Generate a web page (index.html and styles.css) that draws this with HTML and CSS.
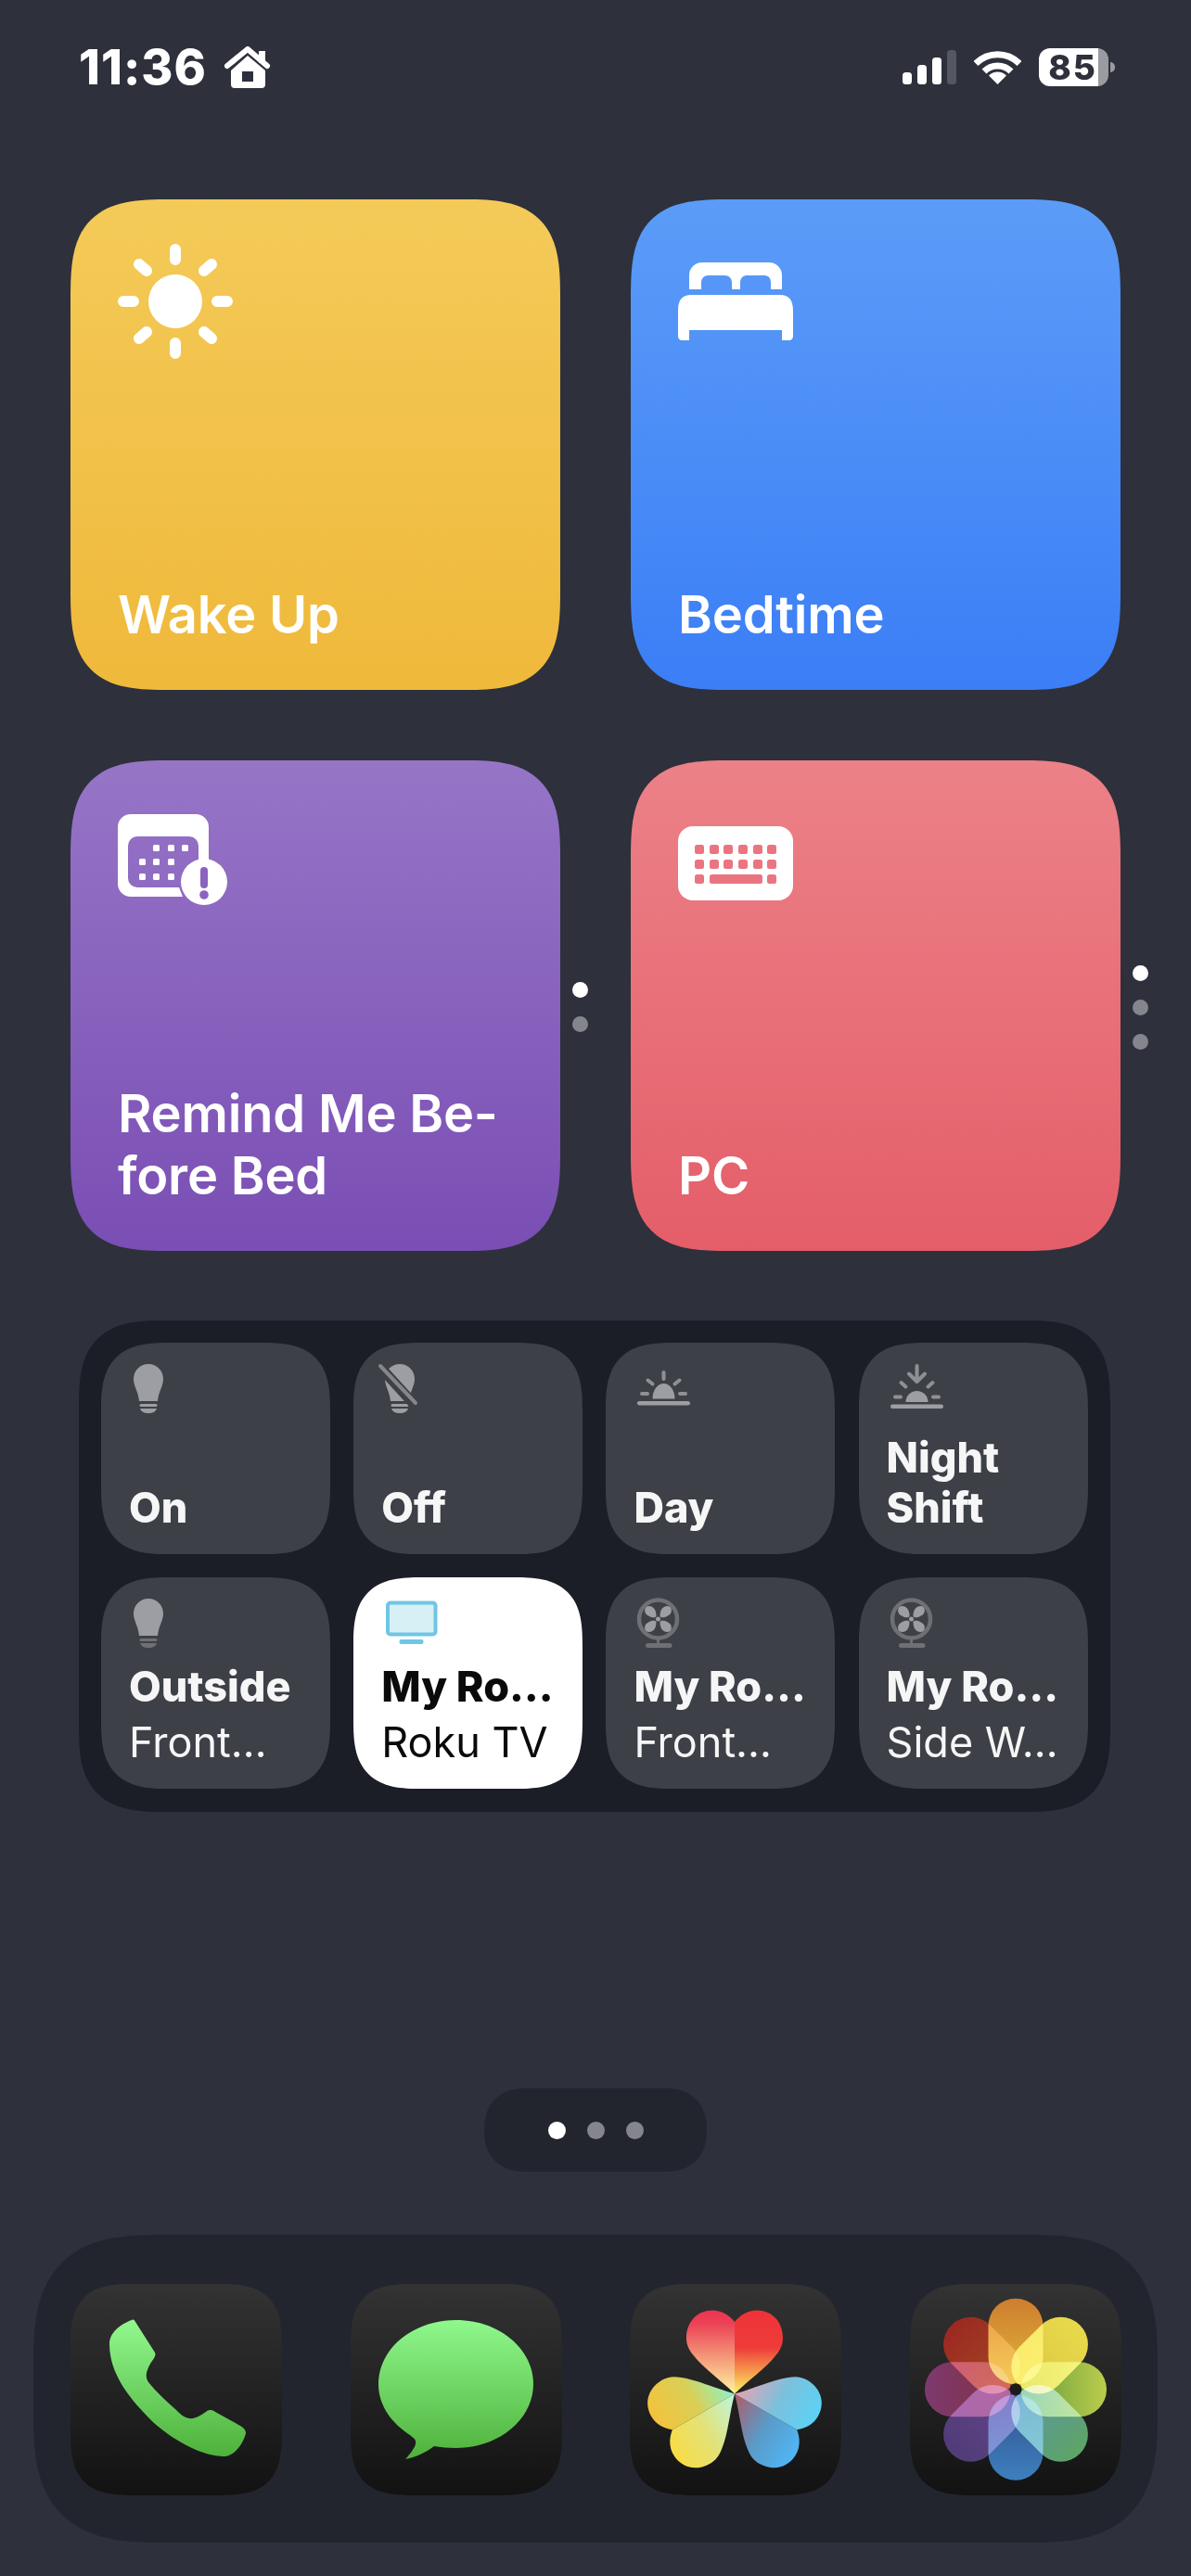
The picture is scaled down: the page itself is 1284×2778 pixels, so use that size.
FILE: index.html
```html
<!DOCTYPE html>
<html lang="en">
<head>
<meta charset="utf-8">
<title>Home Screen</title>
<link rel="stylesheet" href="styles.css">
</head>
<body>
<main class="screen">
  <header class="status">
    <div class="status-left">
      <span class="time">11:36</span>
      <svg class="house" viewBox="0 0 51 45"><path class="w" fill-rule="evenodd" d="M26 10 45 26V41a4 4 0 0 1-4 4H12a4 4 0 0 1-4-4V26ZM20 27V38H32V27Z"/><path class="roof" d="M4 21 26 3 47 21"/><rect class="w" x="38" y="5" width="7" height="13"/></svg>
    </div>
    <div class="status-right">
      <svg class="signal" viewBox="0 0 58 37"><rect class="w" x="0" y="24" width="10" height="13" rx="3.5"/><rect class="w" x="16" y="16" width="10" height="21" rx="3.5"/><rect class="w" x="32" y="8" width="10" height="29" rx="3.5"/><rect class="dim" x="48" y="0" width="10" height="37" rx="3.5"/></svg>
      <svg class="wifi" viewBox="0 0 51 37"><path class="arc" d="M2 14.5A33 33 0 0 1 49 14.5"/><path class="arc" d="M11 23A20.5 20.5 0 0 1 40 23"/><path class="w" d="M25.5 37 16 27.5A13.5 13.5 0 0 1 35 27.5Z"/></svg>
      <div class="battery"><span>85</span></div>
    </div>
  </header>

  <section class="shortcuts">
    <article class="card yellow">
      <svg class="card-icon" viewBox="0 0 125 125"><circle class="w" cx="62" cy="62" r="29"/><g class="rays"><path d="M62 6V17M62 107V118M6 62H17M107 62H118M23 22 31 29M101 22 93 29M23 102 31 95M101 102 93 95"/></g></svg>
      <h2 class="card-title">Wake Up</h2>
    </article>
    <div class="spacer"></div><div class="spacer"></div>
    <article class="card blue">
      <svg class="card-icon" viewBox="0 0 125 125"><path class="w" fill-rule="evenodd" d="M12 49V34A14 14 0 0 1 26 20H98A14 14 0 0 1 112 34V49H100V42C100 36 97 34 92 34H74C70 34 67 37 67 42V49H58V42C58 37 55 34 50 34H33C28 34 25 37 25 42V49Z"/><path class="w" d="M0 72C0 60 5 55 14 55H110C119 55 124 60 124 72V100C124 102 122 104 120 104H112V93H12V104H4C2 104 0 102 0 100Z"/></svg>
      <h2 class="card-title">Bedtime</h2>
    </article>
    <div class="spacer"></div>

    <article class="card purple">
      <svg class="card-icon" viewBox="0 0 125 125"><path class="w" fill-rule="evenodd" d="M14 10H84A14 14 0 0 1 98 24V69H87V44A10 10 0 0 0 77 34H21A10 10 0 0 0 11 44V79A10 10 0 0 0 21 89H66L70 99H14A14 14 0 0 1 0 85V24A14 14 0 0 1 14 10Z"/><g class="w"><rect x="38" y="43" width="7" height="7" rx="1.5"/><rect x="54" y="43" width="7" height="7" rx="1.5"/><rect x="69" y="43" width="7" height="7" rx="1.5"/><rect x="23" y="58" width="7" height="7" rx="1.5"/><rect x="38" y="58" width="7" height="7" rx="1.5"/><rect x="54" y="58" width="7" height="7" rx="1.5"/><rect x="23" y="74" width="7" height="7" rx="1.5"/><rect x="38" y="74" width="7" height="7" rx="1.5"/><rect x="54" y="74" width="7" height="7" rx="1.5"/></g><circle class="w" cx="93" cy="83" r="25"/><rect class="purple-ink" x="89" y="67" width="8" height="23" rx="4"/><circle class="purple-ink" cx="93" cy="97" r="4.8"/></svg>
      <h2 class="card-title">Remind Me Be-<br>fore Bed</h2>
    </article>
    <div class="side-dots"><i class="dot on"></i><i class="dot"></i></div>
    <div class="spacer"></div>
    <article class="card pink">
      <svg class="card-icon" viewBox="0 0 125 125"><rect class="w" x="0" y="23" width="124" height="80" rx="16"/><g class="keys"><rect x="18" y="43" width="10" height="10" rx="2.5"/><rect x="34" y="43" width="10" height="10" rx="2.5"/><rect x="49" y="43" width="10" height="10" rx="2.5"/><rect x="65" y="43" width="10" height="10" rx="2.5"/><rect x="81" y="43" width="10" height="10" rx="2.5"/><rect x="96" y="43" width="10" height="10" rx="2.5"/><rect x="18" y="59" width="10" height="10" rx="2.5"/><rect x="34" y="59" width="10" height="10" rx="2.5"/><rect x="49" y="59" width="10" height="10" rx="2.5"/><rect x="65" y="59" width="10" height="10" rx="2.5"/><rect x="81" y="59" width="10" height="10" rx="2.5"/><rect x="96" y="59" width="10" height="10" rx="2.5"/><rect x="18" y="75" width="10" height="10" rx="2.5"/><rect x="34" y="75" width="57" height="10" rx="2.5"/><rect x="96" y="75" width="10" height="10" rx="2.5"/></g></svg>
      <h2 class="card-title">PC</h2>
    </article>
    <div class="side-dots"><i class="dot on"></i><i class="dot"></i><i class="dot"></i></div>
  </section>

  <section class="widget">
    <article class="tile">
      <svg class="tile-icon" viewBox="0 0 64 54"><g transform="translate(7 0)"><path class="g" d="M16 0C25 0 32 7 32 16 32 24 27 29 26 40H6C5 29 0 24 0 16 0 7 7 0 16 0Z"/><rect class="g" x="6.500" y="43" width="19" height="3" rx="1.500"/><path class="g" d="M7 48H25C24 51 21 53 16 53 11 53 8 51 7 48Z"/></g></svg>
      <h3 class="tile-title">On</h3>
    </article>
    <article class="tile">
      <svg class="tile-icon" viewBox="0 0 64 54"><g transform="translate(6 0)"><path class="g" d="M16 0C25 0 32 7 32 16 32 24 27 29 26 40H6C5 29 0 24 0 16 0 7 7 0 16 0Z"/><rect class="g" x="6.500" y="43" width="19" height="3" rx="1.500"/><path class="g" d="M7 48H25C24 51 21 53 16 53 11 53 8 51 7 48Z"/></g><path class="slash-gap" d="M-3 -1 38 44"/><path class="slash" d="M1 2 39 42"/></svg>
      <h3 class="tile-title">Off</h3>
    </article>
    <article class="tile">
      <svg class="tile-icon" viewBox="0 0 64 54"><g transform="translate(6 8)"><path class="g" d="M16.500 29.500A12 16.500 0 0 1 40.500 29.500Z"/><rect class="g" x="0" y="32" width="57" height="4.500" rx="2.200"/><path class="ray" d="M28.500 1V8M11.500 9.500 16.500 13.500M45.500 9.500 40.500 13.500M5 24H11M46 24H52"/></g></svg>
      <h3 class="tile-title">Day</h3>
    </article>
    <article class="tile">
      <svg class="tile-icon" viewBox="0 0 64 54"><g transform="translate(6 1)"><path class="g" d="M16.500 40A12 12 0 0 1 40.500 40Z"/><rect class="g" x="0" y="42.500" width="57" height="4.500" rx="2.200"/><path class="ray" d="M28.500 1V16M20 9.500 28.500 18 37 9.500M11.500 19 16.500 23.500M45.500 19 40.500 23.500M5 34.500H11M46 34.500H52"/></g></svg>
      <h3 class="tile-title">Night<br>Shift</h3>
    </article>
    <article class="tile">
      <svg class="tile-icon" viewBox="0 0 64 54"><g transform="translate(7 0)"><path class="g" d="M16 0C25 0 32 7 32 16 32 24 27 29 26 40H6C5 29 0 24 0 16 0 7 7 0 16 0Z"/><rect class="g2" x="6.500" y="43" width="19" height="3" rx="1.500"/><path class="g2" d="M7 48H25C24 51 21 53 16 53 11 53 8 51 7 48Z"/></g></svg>
      <h3 class="tile-title">Outside</h3>
      <p class="tile-sub">Front…</p>
    </article>
    <article class="tile active">
      <svg class="tile-icon" viewBox="0 0 64 54"><g transform="translate(7 2.500)"><rect class="tv" x="2" y="2" width="51.500" height="34" rx="3"/><rect class="tv-stand" x="14.500" y="41.500" width="26" height="5" rx="2"/></g></svg>
      <h3 class="tile-title">My Ro…</h3>
      <p class="tile-sub">Roku TV</p>
    </article>
    <article class="tile">
      <svg class="tile-icon" viewBox="0 0 64 54"><use href="#fan" transform="translate(6 0)"/></svg>
      <h3 class="tile-title">My Ro…</h3>
      <p class="tile-sub">Front…</p>
    </article>
    <article class="tile">
      <svg class="tile-icon" viewBox="0 0 64 54"><use href="#fan" transform="translate(6 0)"/></svg>
      <h3 class="tile-title">My Ro…</h3>
      <p class="tile-sub">Side W…</p>
    </article>
  </section>

  <nav class="pages"><i class="page-dot on"></i><i class="page-dot"></i><i class="page-dot"></i></nav>

  <footer class="dock">
    <div class="app">
      <svg viewBox="0 0 228 228"><defs><linearGradient id="gr" x1="0" y1="0" x2="0" y2="1"><stop offset="0" stop-color="#92f88e"/><stop offset="1" stop-color="#4eb13b"/></linearGradient></defs><path fill="url(#gr)" d="M66 39C58 42 42 50 42 65 42 100 68 128 90 150 115 172 145 186 165 186 178 186 187 170 189 161 189 157 186 155 183 153L156 138C152 135 148 136 146 138 140 142 134 146 128 145 122 144 118 140 114 136 104 127 92 116 84 106 80 100 82 94 85 88 88 82 93 78 91 74L70 41C69 39 68 38 66 39Z"/></svg>
    </div>
    <div class="app">
      <svg viewBox="0 0 228 228"><defs><linearGradient id="gm" gradientUnits="userSpaceOnUse" x1="0" y1="39" x2="0" y2="189"><stop offset="0" stop-color="#8ff88c"/><stop offset="1" stop-color="#4eb13b"/></linearGradient></defs><path fill="url(#gm)" d="M113.500 39C160 39 197 70 197 108 197 146 160 177 113.500 177 105 177 97 176 90 175 82 181 71 187 59 189 65 182 71 175 70 170 70 167 67 166 64 163 44 150 30 131 30 108 30 70 67 39 113.500 39Z"/></svg>
    </div>
    <div class="app">
      <svg viewBox="0 0 228 228">
        <defs>
          <path id="hl" d="M0 0C14-14 34-28 44-41 50-48 52-54 52-60 52-78 40-90 24-90 14-90 6-85 0-77.500Z"/>
          <linearGradient id="h1" gradientUnits="userSpaceOnUse" x1="0" y1="0" x2="0" y2="-90"><stop offset="0" stop-color="#fff56a"/><stop offset=".25" stop-color="#f6a04e"/><stop offset=".55" stop-color="#ee3c3a"/><stop offset="1" stop-color="#ee3238"/></linearGradient>
          <linearGradient id="h2" gradientUnits="userSpaceOnUse" x1="0" y1="0" x2="0" y2="-90"><stop offset="0" stop-color="#fff3a0"/><stop offset=".4" stop-color="#f5a07c"/><stop offset=".85" stop-color="#ec4056"/><stop offset="1" stop-color="#ec3450"/></linearGradient>
          <linearGradient id="h3" gradientUnits="userSpaceOnUse" x1="0" y1="0" x2="0" y2="-90"><stop offset="0" stop-color="#b25a68"/><stop offset=".5" stop-color="#5a9ac6"/><stop offset="1" stop-color="#4fb6f6"/></linearGradient>
          <linearGradient id="h4" gradientUnits="userSpaceOnUse" x1="0" y1="0" x2="0" y2="-90"><stop offset="0" stop-color="#e6a4b4"/><stop offset=".5" stop-color="#7cc0dc"/><stop offset="1" stop-color="#5bd2f6"/></linearGradient>
          <linearGradient id="h5" gradientUnits="userSpaceOnUse" x1="0" y1="0" x2="0" y2="-90"><stop offset="0" stop-color="#8ef2c8"/><stop offset=".45" stop-color="#d8d058"/><stop offset="1" stop-color="#f4c23c"/></linearGradient>
          <linearGradient id="h6" gradientUnits="userSpaceOnUse" x1="0" y1="0" x2="0" y2="-90"><stop offset="0" stop-color="#bcf6e0"/><stop offset=".5" stop-color="#e2e27a"/><stop offset="1" stop-color="#f8dc44"/></linearGradient>
        </defs>
        <g transform="translate(113 118.500)">
          <use href="#hl" fill="url(#h1)"/><use href="#hl" fill="url(#h2)" transform="scale(-1 1)"/>
          <g transform="rotate(120)"><use href="#hl" fill="url(#h3)"/><use href="#hl" fill="url(#h4)" transform="scale(-1 1)"/></g>
          <g transform="rotate(-120)"><use href="#hl" fill="url(#h5)"/><use href="#hl" fill="url(#h6)" transform="scale(-1 1)"/></g>
        </g>
      </svg>
    </div>
    <div class="app">
      <svg viewBox="0 0 228 228">
        <defs>
          <rect id="petal" x="-29.500" y="-98" width="59" height="92.500" rx="29.500"/>
          <linearGradient id="p0" gradientUnits="userSpaceOnUse" x1="0" y1="-98" x2="0" y2="-5"><stop offset="0" stop-color="#ce7d2e"/><stop offset="1" stop-color="#e0b83c"/></linearGradient>
          <linearGradient id="p1" gradientUnits="userSpaceOnUse" x1="0" y1="-98" x2="0" y2="-5"><stop offset="0" stop-color="#e8da4c"/><stop offset="1" stop-color="#dcc440"/></linearGradient>
          <linearGradient id="p2" gradientUnits="userSpaceOnUse" x1="0" y1="-98" x2="0" y2="-5"><stop offset="0" stop-color="#bccc4c"/><stop offset="1" stop-color="#5f9a3a"/></linearGradient>
          <linearGradient id="p3" gradientUnits="userSpaceOnUse" x1="0" y1="-98" x2="0" y2="-5"><stop offset="0" stop-color="#5ea464"/><stop offset="1" stop-color="#5c95a8"/></linearGradient>
          <linearGradient id="p4" gradientUnits="userSpaceOnUse" x1="0" y1="-98" x2="0" y2="-5"><stop offset="0" stop-color="#3d80bd"/><stop offset="1" stop-color="#344f8e"/></linearGradient>
          <linearGradient id="p5" gradientUnits="userSpaceOnUse" x1="0" y1="-98" x2="0" y2="-5"><stop offset="0" stop-color="#503c78"/><stop offset="1" stop-color="#644488"/></linearGradient>
          <linearGradient id="p6" gradientUnits="userSpaceOnUse" x1="0" y1="-98" x2="0" y2="-5"><stop offset="0" stop-color="#7e3a70"/><stop offset="1" stop-color="#80303c"/></linearGradient>
          <linearGradient id="p7" gradientUnits="userSpaceOnUse" x1="0" y1="-98" x2="0" y2="-5"><stop offset="0" stop-color="#9c2822"/><stop offset="1" stop-color="#a24a22"/></linearGradient>
        </defs>
        <g class="flower" transform="translate(114 113.700)">
          <use href="#petal" fill="url(#p0)"/>
          <use href="#petal" fill="url(#p1)" transform="rotate(45)"/>
          <use href="#petal" fill="url(#p2)" transform="rotate(90)"/>
          <use href="#petal" fill="url(#p3)" transform="rotate(135)"/>
          <use href="#petal" fill="url(#p4)" transform="rotate(180)"/>
          <use href="#petal" fill="url(#p5)" transform="rotate(225)"/>
          <use href="#petal" fill="url(#p6)" transform="rotate(270)"/>
          <use href="#petal" fill="url(#p7)" transform="rotate(315)"/>
        </g>
        <circle cx="114" cy="113.700" r="6.500" fill="#1b1b1b"/>
      </svg>
    </div>
  </footer>
</main>

<svg class="sprites" width="0" height="0" aria-hidden="true">
  <defs>
    <g id="fan">
      <circle class="fan-ring" cx="22.500" cy="22" r="20.500"/>
      <rect class="g2" x="21" y="42" width="3" height="7"/>
      <rect class="g2" x="9" y="48" width="28.500" height="5" rx="2.500"/>
      <g class="g" transform="translate(22.500 22)">
        <path d="M-2-3C-2-10-5-14-10-14-14-14-15-10-14-7-12-3-6-1-3-2Z"/>
        <path d="M2-3C2-10 5-14 10-14 14-14 15-10 14-7 12-3 6-1 3-2Z"/>
        <path d="M-2 3C-2 10-5 14-10 14-14 14-15 10-14 7-12 3-6 1-3 2Z"/>
        <path d="M2 3C2 10 5 14 10 14 14 14 15 10 14 7 12 3 6 1 3 2Z"/>
        <circle cx="0" cy="0" r="2.500"/>
      </g>
    </g>
  </defs>
</svg>
</body>
</html>
```

FILE: styles.css
```css
* { box-sizing: border-box; }

html, body { margin: 0; padding: 0; }

body {
  width: 1284px;
  height: 2778px;
  overflow: hidden;
  background: #2e303b;
  font-family: Inter, "Noto Sans", sans-serif;
  color: #fff;
}

.screen {
  display: flex;
  flex-direction: column;
  height: 2778px;
}

.sprites { position: absolute; }

.w { fill: #fff; }

/* status bar */
.status {
  display: flex;
  align-items: flex-start;
  justify-content: space-between;
  height: 215px;
  padding: 50px 82px 0 85px;
}

.status-left, .status-right {
  display: flex;
  align-items: center;
  height: 45px;
}

.status-left { gap: 18px; }
.status-right { gap: 19px; }

.time {
  font-size: 52px;
  line-height: 45px;
  font-weight: 800;
  letter-spacing: 1px;
}

.house { width: 51px; height: 45px; }
.roof { fill: none; stroke: #fff; stroke-width: 6px; stroke-linecap: round; stroke-linejoin: round; }
.signal { width: 58px; height: 37px; }
.dim { fill: #565861; }
.wifi { width: 51px; height: 37px; }
.arc { fill: none; stroke: #fff; stroke-width: 7px; }

.battery {
  position: relative;
  width: 75px;
  height: 41px;
  margin-right: 7px;
  border-radius: 12px;
  background: linear-gradient(to right, #fff 85%, #9a9ba0 85%);
  color: #2e303b;
  font-size: 37px;
  font-weight: 800;
  line-height: 41px;
  text-align: center;
  letter-spacing: 2px;
}

.battery span { position: relative; left: -1px; }

.battery::after {
  content: "";
  position: absolute;
  right: -7px;
  top: 15px;
  width: 5px;
  height: 11px;
  border-radius: 0 6px 6px 0;
  background: #9a9ba0;
}

/* shortcuts */
.shortcuts {
  display: grid;
  grid-template-columns: 528px 42px 34px 528px 42px;
  grid-auto-rows: 529px;
  row-gap: 76px;
  margin-left: 76px;
}

.card {
  display: flex;
  flex-direction: column;
  padding: 48px 51px 47px;
  border-radius: 92px;
}

.yellow { background: linear-gradient(#f4ca58, #efb93b); }
.blue { background: linear-gradient(#5b9cf8, #3b7ef6); }
.purple { background: linear-gradient(#9675c7, #7a4eb4); }
.pink { background: linear-gradient(#ec8188, #e45e69); }

.card-icon { width: 125px; height: 125px; overflow: visible; }

.rays path { fill: none; stroke: #fff; stroke-width: 12px; stroke-linecap: round; }
.purple-ink { fill: #8a63bf; }
.keys rect { fill: #ea7580; }

.card-title {
  margin: auto 0 0;
  font-size: 56px;
  line-height: 67px;
  font-weight: 600;
  letter-spacing: -0.2px;
}

.side-dots {
  display: flex;
  flex-direction: column;
  align-items: center;
  justify-content: center;
  gap: 20px;
  padding-top: 3px;
}

.dot {
  width: 17px;
  height: 17px;
  border-radius: 50%;
  background: #85868d;
}

.dot.on { background: #fff; }

/* widget */
.widget {
  display: grid;
  grid-template-columns: repeat(4, 247px);
  grid-auto-rows: 228px;
  gap: 25px 25.200px;
  width: 1112px;
  height: 530px;
  margin: 75px 0 0 85px;
  padding: 24px;
  border-radius: 72px;
  background: #1c1e27;
}

.tile {
  display: flex;
  flex-direction: column;
  padding: 23px 12px 23px 30px;
  border-radius: 58px;
  background: #3e4048;
  color: #f6f6f7;
}

.tile-icon { width: 64px; height: 54px; margin-left: -2px; flex: none; overflow: visible; }

.g { fill: #9d9ea3; }
.g2 { fill: #6f7076; }
.ray { fill: none; stroke: #8f9096; stroke-width: 4px; stroke-linecap: round; stroke-linejoin: round; }
.slash-gap { fill: none; stroke: #3e4048; stroke-width: 11px; }
.slash { fill: none; stroke: #85868b; stroke-width: 4px; stroke-linecap: round; }
.fan-ring { fill: none; stroke: #6f7076; stroke-width: 4.500px; }

.tile-title {
  margin: auto 0 0;
  font-size: 45px;
  line-height: 54px;
  font-weight: 800;
  white-space: nowrap;
}

.tile-sub {
  margin: 6px 0 0;
  font-size: 45px;
  line-height: 54px;
  font-weight: 400;
  white-space: nowrap;
}

.active { background: #fff; color: #0a0a0a; }
.tv { fill: #d6f0f6; stroke: #6fc6e4; stroke-width: 4px; }
.tv-stand { fill: #6fc6e4; }

/* page control */
.pages {
  display: flex;
  align-items: center;
  justify-content: center;
  gap: 23px;
  align-self: flex-start;
  width: 240px;
  height: 90px;
  margin: 298px 0 0 522px;
  border-radius: 45px;
  background: #23252e;
}

.page-dot {
  width: 19px;
  height: 19px;
  border-radius: 50%;
  background: #85868d;
}

.page-dot.on { background: #fff; }

/* dock */
.dock {
  display: flex;
  justify-content: space-between;
  align-self: flex-start;
  width: 1212px;
  height: 332px;
  margin: 68px 0 0 36px;
  padding: 53px 39px 0 40px;
  border-radius: 112px;
  background: #23252e;
}

.app {
  width: 228px;
  height: 228px;
  border-radius: 58px;
  background: linear-gradient(#333333, #121212);
}

.app svg { display: block; width: 228px; height: 228px; }

.flower { isolation: isolate; }
.flower use { mix-blend-mode: screen; }

@supports (corner-shape: superellipse(1.6)) {
  .card { border-radius: 108px; corner-shape: superellipse(1.6); }
  .widget { border-radius: 92px; corner-shape: superellipse(1.5); }
  .tile { border-radius: 74px; corner-shape: superellipse(1.5); }
  .app { border-radius: 72px; corner-shape: superellipse(1.6); }
  .dock { border-radius: 140px; corner-shape: superellipse(1.5); }
  .pages { corner-shape: superellipse(1.2); }
}
```
